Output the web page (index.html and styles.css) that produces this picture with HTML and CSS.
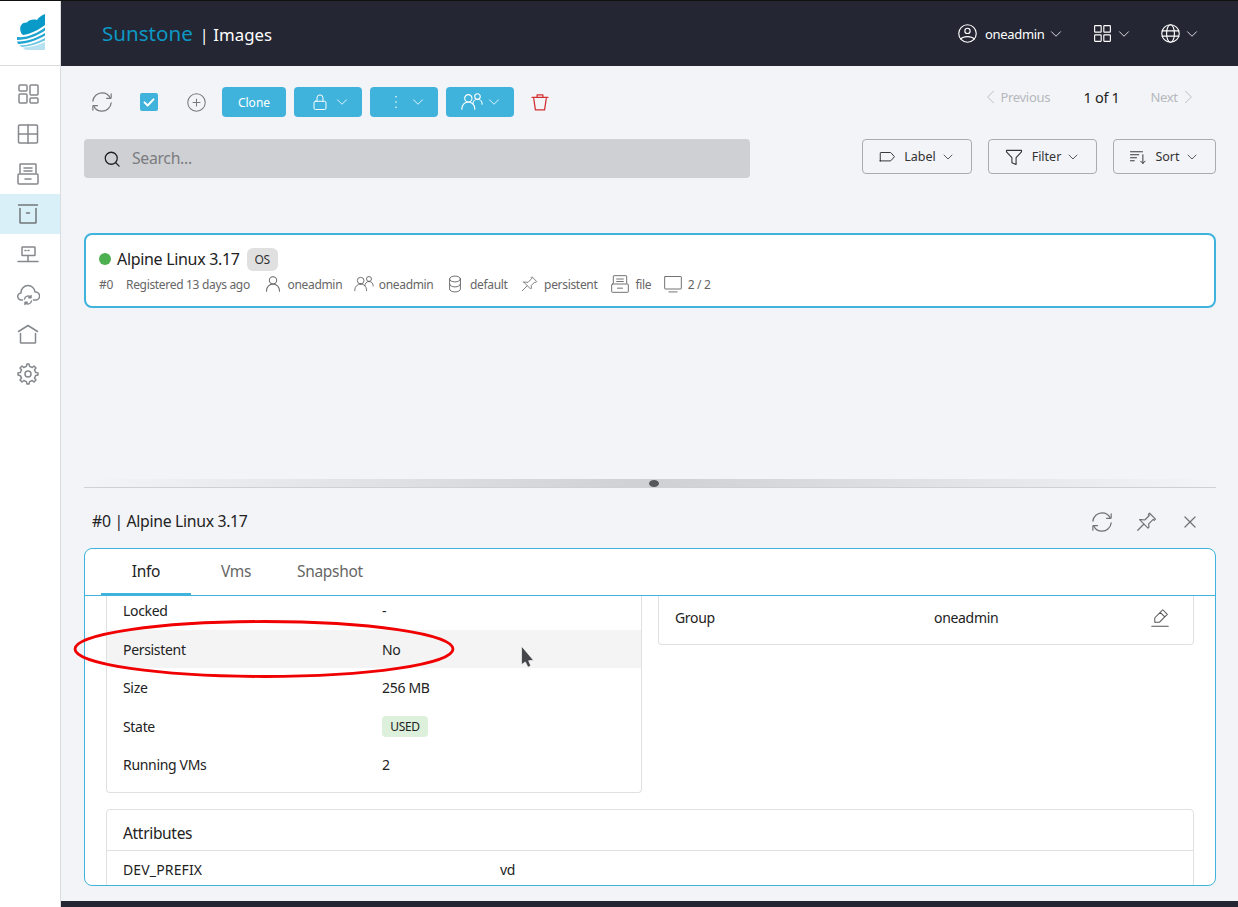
FILE: index.html
```html
<!DOCTYPE html>
<html lang="en">
<head>
<meta charset="utf-8">
<title>Sunstone | Images</title>
<link rel="stylesheet" href="styles.css">
</head>
<body>
<svg class="sprite" xmlns="http://www.w3.org/2000/svg">
  <defs>
    <symbol id="i-dash" viewBox="0 0 24 24"><rect x="3" y="3" width="8" height="6" rx="1"/><rect x="3" y="12" width="8" height="9" rx="1"/><rect x="14" y="3" width="8" height="10" rx="1"/><rect x="14" y="16" width="8" height="5" rx="1"/></symbol>
    <symbol id="i-grid" viewBox="0 0 24 24"><rect x="2.500" y="3" width="19" height="18" rx="1"/><path d="M12 3v18M2.500 12h19"/></symbol>
    <symbol id="i-drawer" viewBox="0 0 24 24"><path d="M4 11V2.600a.6.6 0 0 1 .6-.6h14.800a.6.6 0 0 1 .6.6V11M8 6h8M8 9h8"/><rect x="2" y="12" width="20" height="10" rx="1"/><path d="M9 17h6"/></symbol>
    <symbol id="i-archive" viewBox="0 0 24 24"><path d="M2.500 3h19M4 6.500V20.400a.6.6 0 0 0 .6.600h14.800a.6.6 0 0 0 .6-.600V6.500M10.500 11h3"/></symbol>
    <symbol id="i-net" viewBox="0 0 24 24"><rect x="6" y="5" width="13" height="8.500" rx=".6"/><path d="M9 8.500h1M12 8.500h1M12 13.500v5.500M2 19.500h20"/></symbol>
    <symbol id="i-cloud" viewBox="0 0 24 24"><path d="M6.500 18H5.500a3.500 3.500 0 0 1-.500-7A7 7 0 0 1 19 10a4 4 0 0 1 1 8h-2.500"/><path d="M8.500 17a3.500 3.500 0 0 1 6.300-1.500M15.500 19a3.500 3.500 0 0 1-6.300 1.500M15 13.500v2.200h-2.200M9 22.500v-2.200h2.200"/></symbol>
    <symbol id="i-home" viewBox="0 0 24 24"><path d="M2.500 9.500 12 3.500l9.500 6M4.500 11.500v8.900a.6.6 0 0 0 .6.600h13.800a.6.6 0 0 0 .6-.600v-8.900"/></symbol>
    <symbol id="i-gear" viewBox="0 0 24 24"><path d="M12 15a3 3 0 1 0 0-6 3 3 0 0 0 0 6Z"/><path d="M19.622 10.395l-1.097-2.650L20 6l-2-2-1.735 1.483-2.707-1.113L12.935 2h-1.954l-.632 2.401-2.645 1.115L6 4 4 6l1.453 1.789-1.080 2.657L2 11v2l2.401.656 1.113 2.706L4 18l2 2 1.791-1.460 2.606 1.072L11 22h2l.604-2.387 2.651-1.098C16.697 18.831 18 20 18 20l2-2-1.484-1.750 1.098-2.652 2.386-.620V11l-2.378-.605Z"/></symbol>
    <symbol id="i-refresh" viewBox="0 0 24 24"><path d="M21.168 8A10.003 10.003 0 0 0 12 2C6.815 2 2.550 5.947 2.050 11"/><path d="M17 8h4.400a.6.6 0 0 0 .6-.6V3"/><path d="M2.881 16c1.544 3.532 5.068 6 9.168 6 5.186 0 9.450-3.947 9.951-9"/><path d="M7.050 16h-4.400a.6.6 0 0 0-.6.6V21"/></symbol>
    <symbol id="i-add" viewBox="0 0 24 24"><circle cx="12" cy="12" r="10"/><path d="M8 12h8M12 8v8"/></symbol>
    <symbol id="i-check" viewBox="0 0 24 24"><path d="M6 12.500l4.200 4.200L18 8.500"/></symbol>
    <symbol id="i-lock" viewBox="0 0 24 24"><rect x="4" y="11" width="16" height="11" rx="2"/><path d="M8 11V6.500a4 4 0 0 1 8 0V11"/></symbol>
    <symbol id="i-dots" viewBox="0 0 24 24"><path d="M12 5h.01M12 12h.01M12 19h.01"/></symbol>
    <symbol id="i-chev" viewBox="0 0 24 24"><path d="M6 9l6 6 6-6"/></symbol>
    <symbol id="i-left" viewBox="0 0 24 24"><path d="M15 5l-7 7 7 7"/></symbol>
    <symbol id="i-right" viewBox="0 0 24 24"><path d="M9 5l7 7-7 7"/></symbol>
    <symbol id="i-group" viewBox="0 0 24 24"><path d="M1 20v-1a7 7 0 0 1 14 0v1"/><path d="M13 14a5 5 0 0 1 10 0v.5"/><path d="M8 12a4 4 0 1 0 0-8 4 4 0 0 0 0 8Z"/><path d="M18 9a3 3 0 1 0 0-6 3 3 0 0 0 0 6Z"/></symbol>
    <symbol id="i-trash" viewBox="0 0 24 24"><path d="M4.500 8l2 13.500h11L19.500 8"/><path d="M2.500 6.500h19M8.500 6V3.500h7V6"/></symbol>
    <symbol id="i-search" viewBox="0 0 24 24"><circle cx="11" cy="11" r="8"/><path d="M17 17l4.500 4.500"/></symbol>
    <symbol id="i-profile" viewBox="0 0 24 24"><circle cx="12" cy="12" r="10"/><path d="M4.271 18.346S6.500 15.500 12 15.500s7.730 2.846 7.730 2.846"/><path d="M12 12a3 3 0 1 0 0-6 3 3 0 0 0 0 6Z"/></symbol>
    <symbol id="i-apps" viewBox="0 0 24 24"><rect x="3" y="3" width="7.500" height="7.500" rx=".6"/><rect x="13.500" y="3" width="7.500" height="7.500" rx=".6"/><rect x="3" y="13.500" width="7.500" height="7.500" rx=".6"/><rect x="13.500" y="13.500" width="7.500" height="7.500" rx=".6"/></symbol>
    <symbol id="i-globe" viewBox="0 0 24 24"><circle cx="12" cy="12" r="10"/><ellipse cx="12" cy="12" rx="4.500" ry="10"/><path d="M2.500 9h19M2.500 15h19"/></symbol>
    <symbol id="i-label" viewBox="0 0 24 24"><path d="M3 17.400V6.600a.6.6 0 0 1 .6-.6h13.079a.6.6 0 0 1 .446.198l4.500 5a.6.6 0 0 1 0 .803l-4.500 5a.6.6 0 0 1-.446.199H3.600a.6.6 0 0 1-.6-.6Z"/></symbol>
    <symbol id="i-filter" viewBox="0 0 24 24"><path d="M3 4h18v1.800l-6.500 7v8.200l-5-2v-6.200L3 5.800Z"/></symbol>
    <symbol id="i-sort" viewBox="0 0 24 24"><path d="M2 5h14M2 9h11M2 13h8M2 17h5M18.500 9v11.500M15.500 17.500l3 3 3-3M17 5h1"/></symbol>
    <symbol id="i-user" viewBox="0 0 24 24"><path d="M5 20v-1a7 7 0 0 1 14 0v1"/><path d="M12 12a4 4 0 1 0 0-8 4 4 0 0 0 0 8Z"/></symbol>
    <symbol id="i-db" viewBox="0 0 24 24"><ellipse cx="12" cy="6" rx="6.500" ry="3.500"/><path d="M5.500 6v12c0 1.900 2.900 3.500 6.500 3.500s6.500-1.600 6.500-3.500V6M5.500 12c0 1.900 2.900 3.500 6.500 3.500s6.500-1.600 6.500-3.500"/></symbol>
    <symbol id="i-pin" viewBox="0 0 24 24"><path d="M9.500 14.500 3 21"/><path d="M5 9.485l9.193 9.193 1.060-1.060-.353-3.536 4.950-4.950 1.060 1.060 1.415-1.414-6.364-6.364-1.414 1.414 1.060 1.061-4.950 4.950-3.535-.354L5 9.485Z"/></symbol>
    <symbol id="i-monitor" viewBox="0 0 24 24"><rect x="2" y="3" width="20" height="15" rx=".6"/><path d="M7 21.500h10"/></symbol>
    <symbol id="i-close" viewBox="0 0 24 24"><path d="M6.500 6.500l11 11M17.500 6.500l-11 11"/></symbol>
    <symbol id="i-edit" viewBox="0 0 24 24"><path d="M3 21h18"/><path d="M12.222 5.828 15.050 3 20 7.950l-2.828 2.828m-4.950-4.950-5.607 5.607a1 1 0 0 0-.293.707v4.536h4.536a1 1 0 0 0 .707-.293l5.607-5.607m-4.950-4.950 4.950 4.950"/></symbol>
  </defs>
</svg>

<div class="app">
  <aside class="sidebar">
    <div class="logo">
      <svg class="logo-mark" viewBox="0 0 28 36" xmlns="http://www.w3.org/2000/svg">
        <path class="logo-cloud" d="M28 0C24 1.500 21.500 3.500 20 6C17 5 12 5.500 10 8.500C6 8 3 11 3.200 15C3.300 18 4.500 20 6 21C14 20 22 15.500 28 11Z"/>
        <path class="logo-band" d="M0 23C10 24 20 19.500 28 13.500V16.500C20 22 10 26 0 26Z"/>
        <path class="logo-band" d="M0 27.500C10 28 20 24 28 19V21.500C20 26 10 30 1 30Z"/>
        <path class="logo-band-light" d="M2 31.500C11 31.500 20 28.500 28 24V26.500C20 30 12 32.500 5 33Z"/>
        <path class="logo-band-pale" d="M6 33.500C13 33.500 21 31 28 28V36H10C8 36 6.500 35 6 33.500Z"/>
      </svg>
    </div>
    <nav class="side-nav">
      <a class="side-item"><svg class="ic ic-side"><use href="#i-dash"/></svg></a>
      <a class="side-item"><svg class="ic ic-side"><use href="#i-grid"/></svg></a>
      <a class="side-item"><svg class="ic ic-side"><use href="#i-drawer"/></svg></a>
      <a class="side-item active"><svg class="ic ic-side"><use href="#i-archive"/></svg></a>
      <a class="side-item"><svg class="ic ic-side"><use href="#i-net"/></svg></a>
      <a class="side-item"><svg class="ic ic-side"><use href="#i-cloud"/></svg></a>
      <a class="side-item"><svg class="ic ic-side"><use href="#i-home"/></svg></a>
      <a class="side-item"><svg class="ic ic-side"><use href="#i-gear"/></svg></a>
    </nav>
  </aside>

  <div class="main">
    <header class="topbar">
      <div class="brand"><span class="brand-name">Sunstone</span><span class="brand-sep">|</span><span class="brand-page">Images</span></div>
      <div class="top-actions">
        <div class="top-item top-user"><svg class="ic ic-top"><use href="#i-profile"/></svg><span class="top-name">oneadmin</span><svg class="ic ic-chev-top"><use href="#i-chev"/></svg></div>
        <div class="top-item top-apps"><svg class="ic ic-top"><use href="#i-apps"/></svg><svg class="ic ic-chev-top"><use href="#i-chev"/></svg></div>
        <div class="top-item top-lang"><svg class="ic ic-top"><use href="#i-globe"/></svg><svg class="ic ic-chev-top"><use href="#i-chev"/></svg></div>
      </div>
    </header>

    <div class="content">
      <div class="toolbar">
        <span class="slot slot-a"><svg class="ic ic-tool"><use href="#i-refresh"/></svg></span>
        <span class="slot slot-b"><span class="checkbox"><svg class="ic ic-check"><use href="#i-check"/></svg></span></span>
        <span class="slot slot-a"><svg class="ic ic-add"><use href="#i-add"/></svg></span>
        <button class="btn btn-clone">Clone</button>
        <button class="btn btn-drop"><svg class="ic ic-btn"><use href="#i-lock"/></svg><svg class="ic ic-chev-btn"><use href="#i-chev"/></svg></button>
        <button class="btn btn-drop"><svg class="ic ic-btn ic-dots"><use href="#i-dots"/></svg><svg class="ic ic-chev-btn"><use href="#i-chev"/></svg></button>
        <button class="btn btn-drop btn-group"><svg class="ic ic-btn-wide"><use href="#i-group"/></svg><svg class="ic ic-chev-btn"><use href="#i-chev"/></svg></button>
        <span class="slot slot-a"><svg class="ic ic-trash"><use href="#i-trash"/></svg></span>
        <div class="pager">
          <span class="pager-link pager-prev"><svg class="ic ic-page"><use href="#i-left"/></svg>Previous</span>
          <span class="pager-count">1 of 1</span>
          <span class="pager-link pager-next">Next<svg class="ic ic-page"><use href="#i-right"/></svg></span>
        </div>
      </div>

      <div class="filters">
        <div class="search"><svg class="ic ic-search"><use href="#i-search"/></svg><span>Search...</span></div>
        <div class="filter-btns">
          <button class="fbtn fbtn-label"><svg class="ic ic-f"><use href="#i-label"/></svg><span>Label</span><svg class="ic ic-chev-f"><use href="#i-chev"/></svg></button>
          <button class="fbtn fbtn-filter"><svg class="ic ic-f ic-f-lg"><use href="#i-filter"/></svg><span>Filter</span><svg class="ic ic-chev-f"><use href="#i-chev"/></svg></button>
          <button class="fbtn fbtn-sort"><svg class="ic ic-f"><use href="#i-sort"/></svg><span>Sort</span><svg class="ic ic-chev-f"><use href="#i-chev"/></svg></button>
        </div>
      </div>

      <article class="image-card">
        <div class="card-title"><span class="dot"></span><span class="card-name">Alpine Linux 3.17</span><span class="chip">OS</span></div>
        <div class="card-meta">
          <span class="meta-id">#0</span>
          <span class="meta-reg">Registered 13 days ago</span>
          <span class="meta meta-first"><svg class="ic ic-meta-user"><use href="#i-user"/></svg>oneadmin</span>
          <span class="meta"><svg class="ic ic-meta"><use href="#i-group"/></svg>oneadmin</span>
          <span class="meta"><svg class="ic ic-meta"><use href="#i-db"/></svg>default</span>
          <span class="meta"><svg class="ic ic-meta ic-meta-pin"><use href="#i-pin"/></svg>persistent</span>
          <span class="meta"><svg class="ic ic-meta ic-meta-file"><use href="#i-drawer"/></svg>file</span>
          <span class="meta"><svg class="ic ic-meta"><use href="#i-monitor"/></svg>2 / 2</span>
        </div>
      </article>

      <div class="divider"><span class="handle"></span></div>

      <div class="detail-head">
        <h2 class="detail-title">#0 | Alpine Linux 3.17</h2>
        <div class="detail-actions">
          <span class="head-slot"><svg class="ic ic-tool"><use href="#i-refresh"/></svg></span>
          <span class="head-slot"><svg class="ic ic-tool"><use href="#i-pin"/></svg></span>
          <span class="head-slot"><svg class="ic ic-tool"><use href="#i-close"/></svg></span>
        </div>
      </div>

      <section class="panel">
        <div class="tabs">
          <span class="tab tab-on">Info</span>
          <span class="tab">Vms</span>
          <span class="tab">Snapshot</span>
        </div>
        <div class="panel-body">
          <div class="panel-inner">
            <div class="info-cols">
              <div class="box box-left">
                <div class="row"><span>Locked</span><span>-</span></div>
                <div class="row row-shade"><span>Persistent</span><span>No</span></div>
                <div class="row"><span>Size</span><span>256 MB</span></div>
                <div class="row"><span>State</span><span class="state">USED</span></div>
                <div class="row"><span>Running VMs</span><span>2</span></div>
              </div>
              <div class="box box-right">
                <div class="row row-edit"><span>Group</span><span>oneadmin</span><svg class="ic ic-edit"><use href="#i-edit"/></svg></div>
              </div>
            </div>
            <div class="attrs">
              <h3 class="attrs-title">Attributes</h3>
              <div class="attr-row"><span class="attr-key">DEV_PREFIX</span><span>vd</span></div>
            </div>
          </div>
        </div>
      </section>
    </div>
    <div class="footer-bar"></div>
  </div>

  <svg class="annot" viewBox="0 0 384 60" xmlns="http://www.w3.org/2000/svg"><ellipse cx="192" cy="30" rx="189" ry="27.500"/></svg>
  <svg class="cursor" viewBox="0 0 12 20" xmlns="http://www.w3.org/2000/svg"><path d="M.5 0V17L4 14.500L6.500 19.500L9 18L7 13.500L11.500 13Z"/></svg>
</div>
</body>
</html>
```
FILE: styles.css
```css
* { box-sizing: border-box; }
html, body { margin: 0; padding: 0; }
body {
  width: 1238px;
  height: 907px;
  overflow: hidden;
  font-family: "Noto Sans", "Open Sans", sans-serif;
  letter-spacing: -0.02em;
  color: #222;
  background: #f2f4f8;
}
.sprite { display: none; }
.ic {
  display: block;
  flex: none;
  fill: none;
  stroke: currentColor;
  stroke-width: 1.5;
  stroke-linecap: round;
  stroke-linejoin: round;
  overflow: visible;
}
.app { position: relative; display: flex; width: 1238px; height: 907px; border-top: 1px solid #111; }

/* sidebar */
.sidebar { width: 61px; flex: none; background: #fff; border-right: 1px solid #dcdcdf; }
.logo { height: 65px; display: flex; align-items: flex-start; justify-content: center; padding-top: 13px; border-bottom: 1px solid #dcdcdf; margin-right: -1px; }
.logo-mark { width: 28px; height: 36px; }
.logo-cloud { fill: #0a9ac8; }
.logo-band { fill: #1ea4d0; }
.logo-band-light { fill: #6cc5e3; }
.logo-band-pale { fill: #b8e2f1; }
.side-nav { padding-top: 8px; }
.side-item { display: flex; align-items: center; justify-content: center; height: 40px; padding-right: 4px; color: #85888c; }
.side-item.active { background: #daf0f8; color: #727679; }
.ic-side { width: 24px; height: 24px; }

/* top bar */
.main { flex: 1; min-width: 0; display: flex; flex-direction: column; }
.topbar { height: 65px; flex: none; display: flex; align-items: center; justify-content: space-between; background: #242633; padding: 0 37.500px 0 41px; }
.brand { display: flex; align-items: baseline; padding-bottom: 2px; }
.brand-name { font-size: 20.600px; color: #0c97c4; letter-spacing: 0; }
.brand-sep { color: #fff; font-size: 16px; margin: 0 5px 0 7px; }
.brand-page { color: #fff; font-size: 16.800px; letter-spacing: 0; }
.top-actions { display: flex; align-items: center; color: #fff; }
.top-item { display: flex; align-items: center; }
.top-name { font-size: 13px; margin-left: 7.500px; width: 62px; }
.top-apps { margin-left: 27px; }
.top-lang { margin-left: 27px; }
.ic-top { width: 21px; height: 21px; stroke-width: 1.300; }
.ic-chev-top { width: 18px; height: 18px; stroke-width: 1.100; }
.top-apps .ic-chev-top { margin-left: 1.500px; }
.top-lang .ic-chev-top { margin-left: 2px; }

/* toolbar */
.content { flex: 1; min-height: 0; padding: 21px 22px 0 23px; }
.toolbar { display: flex; align-items: center; gap: 8px; height: 30px; }
.slot { display: flex; align-items: center; justify-content: center; height: 30px; color: #77797d; }
.slot-a { width: 36px; }
.slot-b { width: 42px; }
.ic-tool { width: 22px; height: 22px; stroke-width: 1.300; }
.ic-add { width: 21px; height: 21px; stroke-width: 1.200; }
.checkbox { display: flex; align-items: center; justify-content: center; width: 18px; height: 18px; background: #40b3dc; border-radius: 2px; color: #fff; }
.ic-check { width: 18px; height: 18px; stroke-width: 2.600; }
.btn { display: flex; align-items: center; justify-content: center; height: 30px; border: 0; border-radius: 4px; background: #40b3dc; color: #fff; font: inherit; font-size: 12px; padding: 0; }
.btn-clone { width: 64px; }
.btn-drop { width: 68px; justify-content: flex-start; padding-left: 17px; gap: 4px; }
.btn-group { padding-left: 15px; gap: 2px; }
.ic-btn { width: 18px; height: 18px; stroke-width: 1.300; }
.ic-dots { stroke-width: 2.200; }
.ic-btn-wide { width: 22px; height: 22px; stroke-width: 1.200; }
.ic-chev-btn { width: 18px; height: 18px; stroke-width: 1.100; }
.ic-trash { width: 20px; height: 20px; color: #d32f2f; }
.pager { margin-left: auto; display: flex; align-items: flex-start; align-self: flex-start; height: 20px; margin-right: 16.500px; font-size: 13px; line-height: 20px; }
.pager-link { display: flex; align-items: center; color: #b6b8bc; }
.pager-prev { width: 71px; }
.pager-next { width: 49px; }
.pager-count { width: 35px; margin: 0 32px; font-size: 14.500px; white-space: nowrap; }
.ic-page { width: 20px; height: 20px; stroke-width: 1.100; }

/* filters */
.filters { display: flex; justify-content: space-between; align-items: flex-start; height: 39px; margin-top: 22px; }
.search { display: flex; align-items: center; width: 666px; height: 39px; padding-left: 19px; gap: 11px; border-radius: 4px; background: #cfd0d3; color: #7a7c80; font-size: 15.800px; }
.search span { padding-bottom: 2px; }
.ic-search { width: 18px; height: 18px; color: #222; stroke-width: 1.700; }
.filter-btns { display: flex; gap: 16px; }
.fbtn { display: flex; align-items: center; justify-content: center; gap: 8px; height: 35px; border: 1px solid #a9abaf; border-radius: 4px; background: transparent; font: inherit; font-size: 12.500px; color: #333; padding: 0; }
.ic-chev-f { width: 16px; height: 16px; margin-left: -4px; stroke-width: 1.200; }
.fbtn-label { width: 110px; }
.fbtn-filter { width: 109px; }
.fbtn-sort { width: 103px; }
.ic-f { width: 18px; height: 18px; stroke-width: 1.300; }
.ic-f-lg { width: 20px; height: 20px; }

/* resource card */
.image-card { height: 75px; margin-top: 55px; padding: 13px 13px 0; background: #fff; border: 2px solid #40b3dc; border-radius: 8px; }
.card-title { display: flex; align-items: center; height: 22px; }
.dot { width: 12px; height: 12px; border-radius: 50%; background: #4caf50; margin-right: 6px; }
.card-name { font-size: 16px; color: #222; }
.chip { display: flex; align-items: center; justify-content: center; width: 31px; height: 23px; margin-left: 7px; border-radius: 6px; background: #e0e0e0; font-size: 12px; color: #333; }
.card-meta { display: flex; align-items: center; height: 16px; margin-top: 6px; font-size: 12px; color: #666; }
.meta-id { width: 27px; }
.meta-reg { width: 135.500px; white-space: nowrap; }
.meta { display: flex; align-items: center; gap: 5px; margin-right: 11.500px; white-space: nowrap; }
.meta-first { gap: 4px; }
.ic-meta { width: 20px; height: 20px; stroke-width: 1.100; color: #666; }
.ic-meta-user { width: 22px; height: 22px; stroke-width: 1.100; color: #666; }
.ic-meta-pin { width: 18px; height: 18px; margin: 0 1px; }
.ic-meta-file { margin-left: 1.500px; }

/* splitter */
.divider { position: relative; height: 9px; margin-top: 171px; border-bottom: 1px solid #cfd0d3; background: linear-gradient(to right, rgba(200,201,204,0), #cfd0d3 50%, rgba(200,201,204,0)); }
.handle { position: absolute; left: 565px; top: 1px; width: 10px; height: 7px; border-radius: 50%; background: #55575a; }

/* detail */
.detail-head { display: flex; align-items: center; justify-content: space-between; height: 60px; padding: 6px 4px 0 8px; }
.detail-title { margin: 0; font-size: 15.800px; font-weight: 400; color: #222; }
.detail-actions { display: flex; padding-top: 1px; }
.head-slot { display: flex; align-items: center; justify-content: center; width: 44px; color: #6f7175; }
.panel { height: 338px; display: flex; flex-direction: column; background: #fff; border: 1px solid #40b3dc; border-radius: 8px; overflow: hidden; }
.tabs { display: flex; flex: none; height: 47px; padding-left: 16px; border-bottom: 1px solid #40b3dc; }
.tab { display: flex; align-items: center; justify-content: center; min-width: 90px; padding: 0 16px; height: 44px; font-size: 15.500px; color: #666; }
.tab-on { color: #222; border-bottom: 3px solid #40b3dc; height: 47px; }
.panel-body { flex: 1; min-height: 0; overflow: hidden; padding: 0 21px; }
.panel-inner { margin-top: -5px; }
.info-cols { display: flex; gap: 16px; align-items: flex-start; }
.box { flex: 1; background: #fff; border: 1px solid #e0e0e0; border-top: 0; border-radius: 0 0 4px 4px; font-size: 14px; color: #222; }
.box-left { padding-bottom: 8px; }
.box-right { padding: 7px 0 7px; }
.row { display: grid; grid-template-columns: 259px 1fr; align-items: center; height: 38.500px; padding: 1px 0 0 16px; }
.row-shade { background: #f4f4f4; }
.row-edit { grid-template-columns: 259px 1fr 22px; padding-right: 22px; }
.ic-edit { width: 22px; height: 22px; stroke-width: 1.100; color: #555; }
.state { display: inline-flex; align-items: center; justify-content: center; width: 46px; height: 21px; border-radius: 4px; background: #dcf0dc; font-size: 12px; }
.attrs { margin-top: 16px; border: 1px solid #e0e0e0; border-radius: 4px; font-size: 14px; }
.attrs-title { margin: 0; height: 41px; padding: 0 16px; line-height: 46px; border-bottom: 1px solid #e0e0e0; font-size: 15.500px; font-weight: 400; }
.attr-row { display: grid; grid-template-columns: 377px 1fr; align-items: center; height: 38px; padding-left: 16px; }
.attr-key { letter-spacing: 0.01em; }
.footer-bar { height: 6px; flex: none; background: #242633; }

/* overlays */
.annot { position: absolute; left: 72px; top: 618px; width: 384px; height: 60px; fill: none; stroke: #f00000; stroke-width: 2.800; }
.cursor { position: absolute; left: 521px; top: 645px; width: 13px; height: 22px; fill: #44464a; stroke: #fff; stroke-width: .6; }
```
